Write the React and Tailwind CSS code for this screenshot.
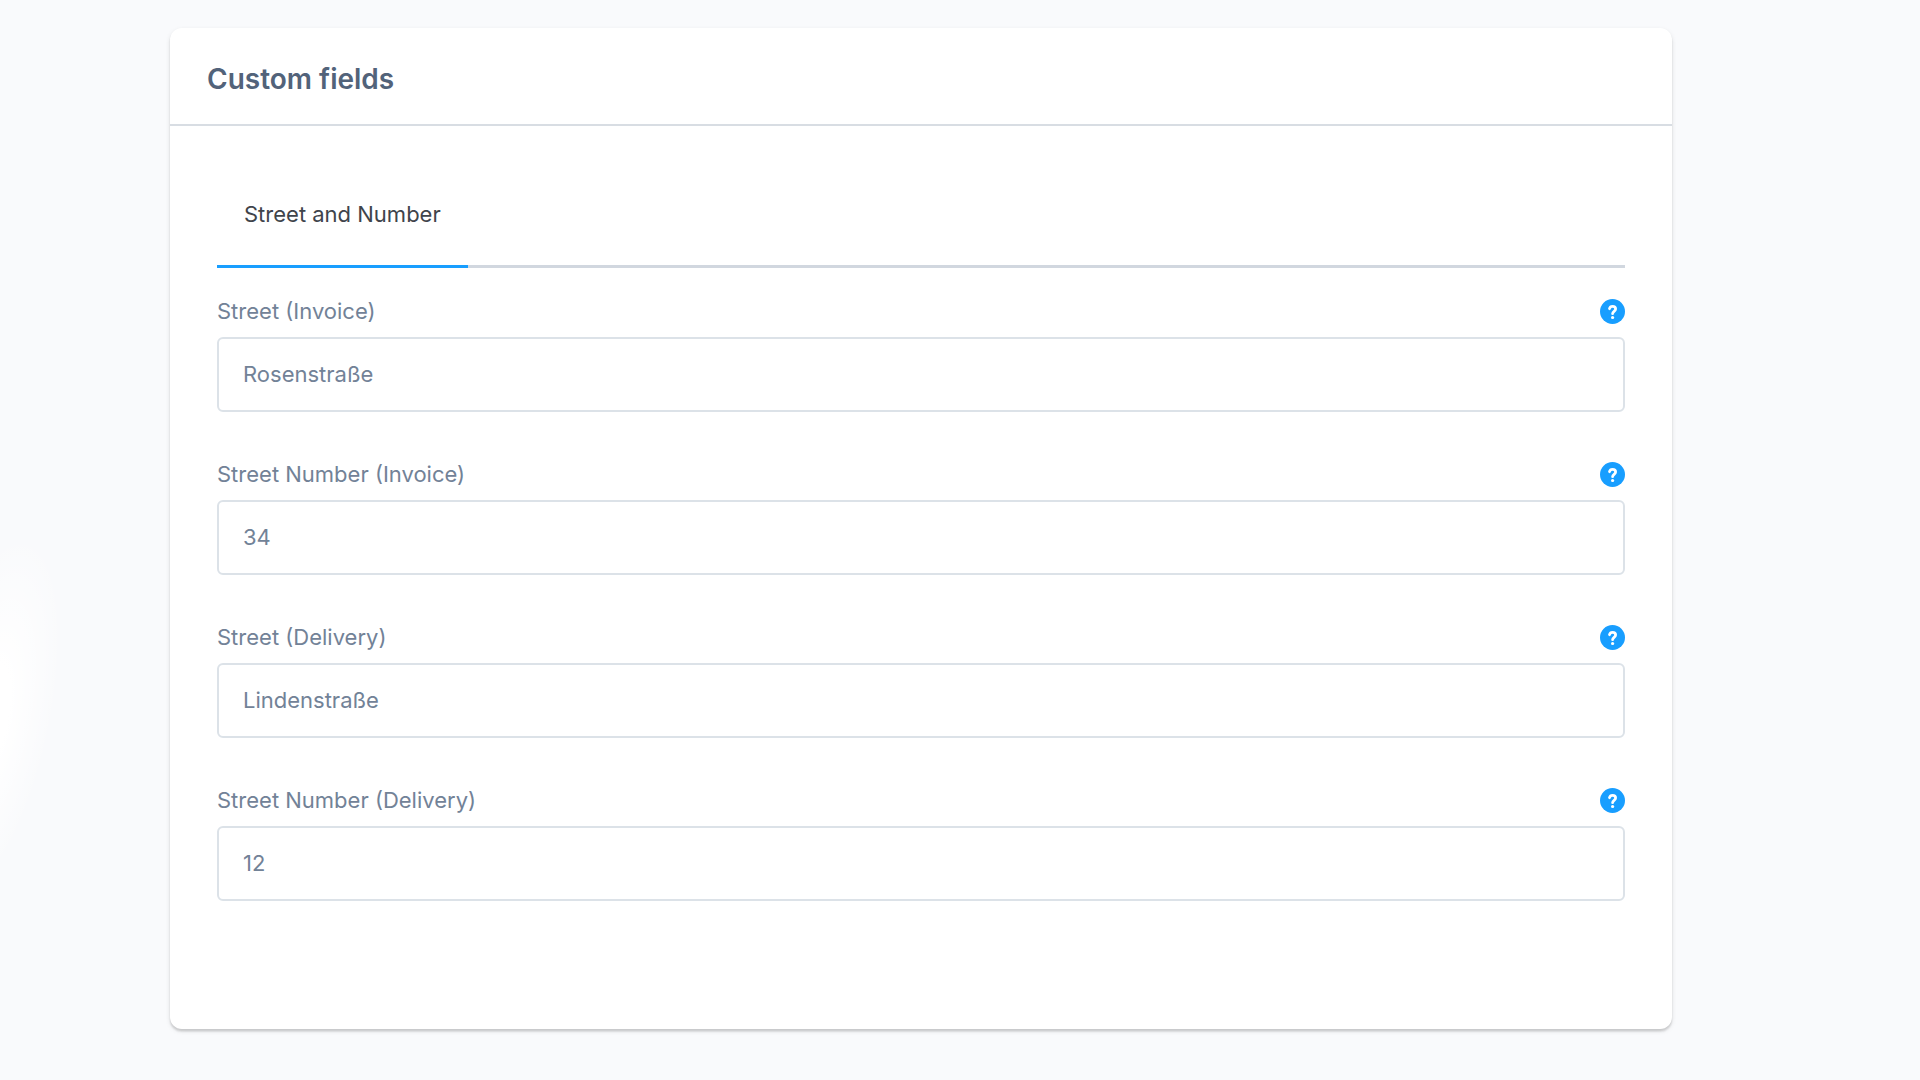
import React, { useState } from 'react';

const fields = [
  { id: 'street-invoice', label: 'Street (Invoice)', value: 'Rosenstraße' },
  { id: 'street-number-invoice', label: 'Street Number (Invoice)', value: '34' },
  { id: 'street-delivery', label: 'Street (Delivery)', value: 'Lindenstraße' },
  { id: 'street-number-delivery', label: 'Street Number (Delivery)', value: '12' },
];

function HelpIcon() {
  return (
    <svg viewBox="0 0 25 25" className="block size-[25px]" aria-hidden="true">
      <circle cx="12.5" cy="12.5" r="12.5" fill="#189eff" />
      <path d="M9.5 9.7c.4-1.5 1.5-2.3 3-2.3 1.8 0 3.1 1.1 3.1 2.7 0 2.3-3 2.3-3 4.6" fill="none" stroke="#fff" strokeWidth="2.8" strokeLinecap="round" strokeLinejoin="round" />
      <circle cx="12.6" cy="18.5" r="1.6" fill="#fff" />
    </svg>
  );
}

function Field({ id, label, value }) {
  const [text, setText] = useState(value);

  return (
    <div>
      <div className="mb-2 flex items-center justify-between">
        <label htmlFor={id} className="text-[22px] leading-9">{label}</label>
        <button type="button" aria-label={`Help: ${label}`} className="cursor-pointer rounded-full">
          <HelpIcon />
        </button>
      </div>
      <input
        id={id}
        type="text"
        value={text}
        onChange={(e) => setText(e.target.value)}
        className="block h-[75px] w-full rounded-md border-2 border-[#dce2e8] bg-white px-6 pb-0.5 text-[22px] outline-none focus:border-[#189eff]"
      />
    </div>
  );
}

function App() {
  return (
    <div className="relative min-h-screen overflow-hidden bg-[#f9fafc] pt-7 pr-[248px] pb-[51px] pl-[170px] font-[Inter,sans-serif] text-[#728297]">
      {/* Soft light at the left edge */}
      <div className="pointer-events-none absolute top-[530px] -left-[76px] h-[380px] w-[128px] rotate-12 bg-[radial-gradient(closest-side,#ffffff_30%,#ffffff00)]" />

      <section className="relative rounded-xl bg-white shadow-[0_2px_2px_rgba(0,0,0,0.08),0_3px_2px_rgba(0,0,0,0.06),0_2px_5px_rgba(0,0,0,0.1)]">
        <header className="border-b-2 border-[#d8dde3] px-[37px] pt-8 pb-[26px]">
          <h2 className="text-[28px] leading-[38px] font-semibold text-[#52637a]">Custom fields</h2>
        </header>

        <div className="px-[47px] pt-9 pb-32">
          <div role="tablist" className="mb-[25px] flex border-b-3 border-[#d1d7df]">
            <button
              type="button"
              role="tab"
              aria-selected="true"
              className="-mb-[3px] cursor-pointer border-b-3 border-[#189eff] px-[27px] pt-9 pb-[35px] text-[22px] leading-8 text-[#3f444b]"
            >
              Street and Number
            </button>
          </div>

          <div className="flex flex-col gap-11">
            {fields.map((field) => (
              <Field key={field.id} {...field} />
            ))}
          </div>
        </div>
      </section>
    </div>
  );
}

export default App;
